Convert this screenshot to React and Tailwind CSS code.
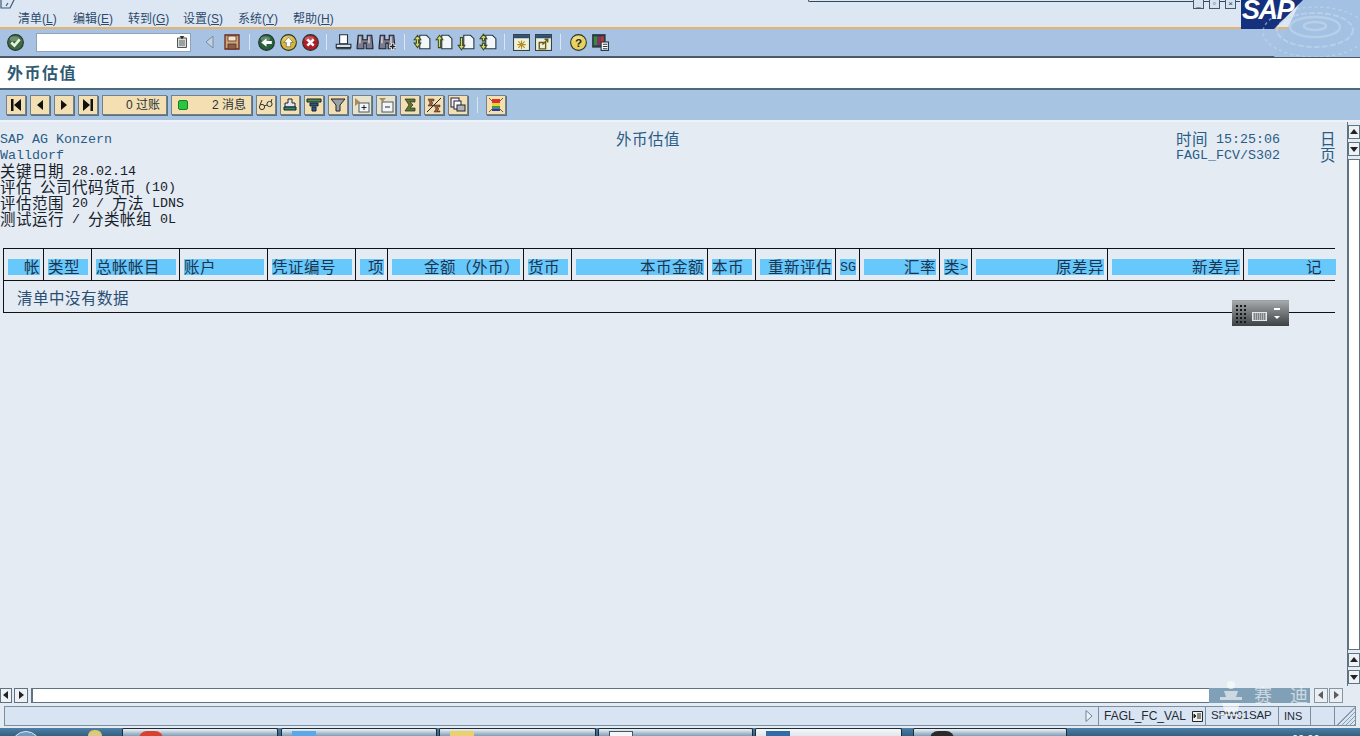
const cjkRe = /([\u0000-\u00ff]+)/;

// latin at 8px advance, CJK at 16px, like the SAP list font
const Mono = ({ text }) => (
  <>
    {text.split(cjkRe).filter(Boolean).map((part, i) =>
      cjkRe.test(part) ? (
        <span key={i} className="h-4 leading-[18px] text-[13.33px]">{part}</span>
      ) : (
        <span key={i} className="h-4 leading-[14px] text-[15.5px] tracking-[0.5px] font-['Noto_Sans_CJK_SC',sans-serif]">{part}</span>
      )
    )}
  </>
);

const Icon = ({ children, className = "w-4 h-4" }) => (
  <svg viewBox="0 0 16 16" className={className}>{children}</svg>
);

const Round = ({ fill, children }) => (
  <Icon className="w-[17px] h-[17px]">
    <circle cx="8" cy="8" r="7.4" fill={fill} stroke="#26352c" strokeWidth="1" />
    <ellipse cx="7" cy="4.5" rx="4.5" ry="2.4" fill="#ffffff" opacity="0.25" />
    {children}
  </Icon>
);

const Binoculars = ({ plus }) => (
  <Icon className="w-[18px] h-[18px]">
    <path d="M2 2h4v4h4V2h4l1 10v2H9V9H7v5H1v-2z" fill="#7c7c8e" stroke="#22222c" strokeWidth="1" />
    <path d="M3.500 3v6M11.500 3v6" stroke="#dcdce6" strokeWidth="1.2" />
    {plus && <path d="M10 12h6M13 9v6" stroke="#ffffff" strokeWidth="3" />}
    {plus && <path d="M10.5 12h5M13 9.5v5" stroke="#222" strokeWidth="1.4" />}
  </Icon>
);

const Page = ({ arrow }) => (
  <Icon className="w-[18px] h-[18px]">
    <path d="M6 2h6l3 3v9H6z" fill="#f4f7fa" stroke="#2a3a44" />
    <path d={arrow} fill="#d9d76a" stroke="#3a4a22" strokeWidth="0.9" />
  </Icon>
);

const MiniWin = ({ children }) => (
  <Icon className="w-[17px] h-[17px]">
    <rect x="0.5" y="0.5" width="15" height="15" fill="#eef2d8" stroke="#34424c" />
    <rect x="1" y="1" width="14" height="3" fill="#2d4d72" />
    {children}
  </Icon>
);

const Sep = ({ className }) => (
  <div className={`flex justify-center ${className}`}>
    <div className="w-px h-[16px] bg-[#dbe6f2]" />
  </div>
);

const Tool = ({ children }) => (
  <div className="w-[22px] h-[20px] flex items-center justify-center shrink-0">{children}</div>
);

const Btn = ({ children, light }) => (
  <div
    className={`w-5 h-5 shrink-0 flex items-center justify-center border border-[#71828f] shadow-[1px_1px_0_#5f6f7c] ${
      light ? "bg-[#e7e3cd]" : "bg-[#f3dfb2]"
    }`}
  >
    {children}
  </div>
);

const columns = [
  { w: "w-[40px]", t: "帐", right: true },
  { w: "w-[48px]", t: "类型" },
  { w: "w-[88px]", t: "总帐帐目" },
  { w: "w-[88px]", t: "账户" },
  { w: "w-[88px]", t: "凭证编号" },
  { w: "w-[32px]", t: "项", right: true },
  { w: "w-[136px]", t: "金额（外币）", right: true },
  { w: "w-[48px]", t: "货币" },
  { w: "w-[136px]", t: "本币金额", right: true },
  { w: "w-[48px]", t: "本币" },
  { w: "w-[80px]", t: "重新评估", right: true },
  { w: "w-[24px]", t: "SG" },
  { w: "w-[80px]", t: "汇率", right: true },
  { w: "w-[32px]", t: "类>" },
  { w: "w-[136px]", t: "原差异", right: true },
  { w: "w-[136px]", t: "新差异", right: true },
  { w: "w-[92px]", t: "记", right: true, last: true },
];

const menus = [
  ["清单", "L"],
  ["编辑", "E"],
  ["转到", "G"],
  ["设置", "S"],
  ["系统", "Y"],
  ["帮助", "H"],
];

const ScrollBtn = ({ dir, className = "" }) => (
  <div className={`border border-[#5f7480] bg-[#eef2f6] flex items-center justify-center ${className}`}>
    <svg viewBox="0 0 8 8" className="w-2 h-2">
      {dir === "up" && <path d="M0 6L4 1l4 5z" fill="#222" />}
      {dir === "down" && <path d="M0 2l4 5 4-5z" fill="#222" />}
      {dir === "left" && <path d="M6 0L1 4l5 4z" fill="#222" />}
      {dir === "right" && <path d="M2 0l5 4-5 4z" fill="#222" />}
    </svg>
  </div>
);

const Menu = () => (
  <div className="relative h-[29px] shrink-0 bg-[#dde7f3] border-b-2 border-[#e6b36c] flex items-end pl-[18px] gap-[13px] text-[12px] leading-[16px] text-[#2d4a6c] font-['Liberation_Sans','Noto_Sans_CJK_SC',sans-serif]">
    <svg viewBox="0 0 16 10" className="absolute left-0 top-0 w-4 h-[10px]">
      <path d="M1 0v8h9l4-8M6 6l2-3" fill="none" stroke="#3a5a7a" strokeWidth="1.2" />
    </svg>
    <div className="absolute left-[808px] top-0 w-[432px] h-[2px] border-b border-l border-[#33475a] rounded-bl-sm" />
    {menus.map(([name, key]) => (
      <span key={key} className="w-[42px] whitespace-nowrap">
        {name}(<span className="underline">{key}</span>)
      </span>
    ))}
    <div className="absolute left-[1193px] top-0 flex gap-[5px]">
      {["_", "▫", "×"].map((g) => (
        <span key={g} className="w-[11px] h-[9px] border border-t-0 border-[#43586c] bg-[#d6e2ef] text-[8px] leading-[7px] text-center text-[#2a3a4a]">
          {g}
        </span>
      ))}
    </div>
  </div>
);

const Logo = () => (
  <div className="absolute left-[1241px] top-0 w-[119px] h-[57px] overflow-hidden">
    <svg viewBox="0 0 119 57" className="absolute inset-0 w-full h-full">
      <path d="M60 0h59v57H33z" fill="#a3c1e2" />
      <path d="M0 0h62L33 29H0z" fill="#15307c" />
      <g fill="none" stroke="#c8dcf0" opacity="0.55">
        <ellipse cx="74" cy="26" rx="11" ry="4" strokeWidth="2.5" />
        <ellipse cx="74" cy="27" rx="25" ry="10" strokeWidth="2.5" />
        <ellipse cx="74" cy="30" rx="38" ry="17" strokeWidth="2" strokeDasharray="6 2" />
        <ellipse cx="74" cy="32" rx="52" ry="25" strokeWidth="1.5" strokeDasharray="3 3" />
      </g>
    </svg>
    <span className="absolute left-[1px] top-[-6px] text-[27px] leading-[32px] font-bold italic tracking-[-1.5px] text-white font-['Liberation_Sans',sans-serif]">
      SAP
    </span>
  </div>
);

const Toolbar = () => (
  <div className="h-[29px] shrink-0 bg-[#a7c2e2] border-b-2 border-[#4b5a66] flex items-center pl-1 pb-[1px]">
    <Tool>
      <Round fill="#3e6a45"><path d="M4 8l3 3 5-6" fill="none" stroke="#eef4d8" strokeWidth="2.4" /></Round>
    </Tool>
    <div className="ml-[10px] w-[155px] h-[19px] bg-white border border-[#8ea3b8] flex items-center justify-end pr-[3px]">
      <svg viewBox="0 0 10 12" className="w-[10px] h-3">
        <path d="M0.5 2h9v9.5h-9z" fill="#d8dcd8" stroke="#4a5a5a" />
        <path d="M3 0h4l-2 3z M2 5h6M2 7h6M2 9h6" fill="#222" stroke="#444" strokeWidth="0.8" />
      </svg>
    </div>
    <div className="ml-2" />
    <Tool>
      <svg viewBox="0 0 10 14" className="w-[10px] h-[14px]"><path d="M8 1L1 7l7 6z" fill="#c3d2e2" stroke="#7d8c9a" /></svg>
    </Tool>
    <Tool>
      <Icon>
        <path d="M1 1h14v14H1z" fill="#c9a878" stroke="#6a2a22" strokeWidth="1.3" />
        <path d="M4 2h8v5H4z" fill="#efe6d2" stroke="#6a2a22" strokeWidth="0.8" />
        <path d="M4 10h8v5H4z" fill="#86604a" stroke="#6a2a22" strokeWidth="0.8" />
      </Icon>
    </Tool>
    <Sep className="w-3" />
    <Tool>
      <Round fill="#28623c"><path d="M3 8l5-4v2.5h5v3H8V12z" fill="#fff" /></Round>
    </Tool>
    <Tool>
      <Round fill="#d8b838"><path d="M8 3l4.5 5H10v4H6V8H3.500z" fill="#fff" stroke="#444" strokeWidth="0.5" /></Round>
    </Tool>
    <Tool>
      <Round fill="#b01d26"><path d="M5 5l6 6M11 5l-6 6" stroke="#fff" strokeWidth="2.4" /></Round>
    </Tool>
    <Sep className="w-[11px]" />
    <Tool>
      <Icon className="w-[18px] h-[18px]">
        <path d="M5 1.500h7l0 8H5z" fill="#fff" stroke="#25313c" />
        <path d="M2 10h13v3H2z" fill="#d8dee4" stroke="#25313c" />
        <path d="M2 13.500h13v1H2z" fill="#25313c" />
      </Icon>
    </Tool>
    <Tool><Binoculars /></Tool>
    <Tool><Binoculars plus /></Tool>
    <Sep className="w-[13px]" />
    <Tool><Page arrow="M1 6l3-4 3 4H5v3l2 0-3 4-3-4h2V6z" /></Tool>
    <Tool><Page arrow="M1 6l3-4 3 4H5v7H3V6z" /></Tool>
    <Tool><Page arrow="M3 4h2v7h2l-3 4-3-4h2z" /></Tool>
    <Tool><Page arrow="M1 5l3-4 3 4H5v2H3V5zM3 9h2v2h2l-3 4-3-4h2z" /></Tool>
    <Sep className="w-[11px]" />
    <Tool>
      <MiniWin><path d="M8 6v8M4 10h8M5 7l6 6M11 7l-6 6" stroke="#b88a20" strokeWidth="1" /></MiniWin>
    </Tool>
    <Tool>
      <MiniWin><path d="M4 14V8h6v6zM7 10l5-5M9 5h3v3" fill="none" stroke="#6a5a18" strokeWidth="1.3" /></MiniWin>
    </Tool>
    <Sep className="w-[13px]" />
    <Tool>
      <Round fill="#e8d25a"><text x="8" y="12.500" fontSize="11" fontWeight="700" textAnchor="middle" fill="#2a2a2a" fontFamily="Liberation Sans">?</text></Round>
    </Tool>
    <Tool>
      <Icon className="w-[18px] h-[18px]">
        <rect x="1" y="1" width="12" height="12" fill="#2b3a42" />
        <rect x="2.500" y="3" width="3" height="8" fill="#3a8a3e" />
        <rect x="5.500" y="3" width="3" height="8" fill="#8a2f6a" />
        <rect x="8.500" y="3" width="3" height="8" fill="#b03a3a" />
        <rect x="9" y="8" width="6.500" height="7.500" fill="#fff" stroke="#2b3a42" />
        <path d="M10.500 10h4M10.500 12h4M10.500 14h4" stroke="#2b3a42" />
      </Icon>
    </Tool>
  </div>
);

const ListToolbar = () => (
  <div className="h-[30px] shrink-0 bg-[#a8c4e3] flex items-center gap-1 pl-[6px]">
    <Btn><svg viewBox="0 0 10 12" className="w-[10px] h-3"><path d="M0 0h2.500v12H0zM10 0L3 6l7 6z" fill="#111" /></svg></Btn>
    <Btn><svg viewBox="0 0 10 12" className="w-[10px] h-3"><path d="M8 1L2 6l6 5z" fill="#111" /></svg></Btn>
    <Btn><svg viewBox="0 0 10 12" className="w-[10px] h-3"><path d="M2 1l6 5-6 5z" fill="#111" /></svg></Btn>
    <Btn><svg viewBox="0 0 10 12" className="w-[10px] h-3"><path d="M0 0l7 6-7 6zM7.500 0H10v12H7.500z" fill="#111" /></svg></Btn>
    <div className="w-[65px] h-5 shrink-0 border border-[#71828f] shadow-[1px_1px_0_#5f6f7c] bg-[#f3dfb2] flex items-center justify-end pr-[6px] text-[12px] text-[#26333f] font-['Liberation_Sans','Noto_Sans_CJK_SC',sans-serif] whitespace-pre">
      0 过账
    </div>
    <div className="w-[81px] h-5 shrink-0 border border-[#71828f] shadow-[1px_1px_0_#5f6f7c] bg-[#f3dfb2] flex items-center pl-[6px] pr-[5px] justify-between text-[12px] text-[#26333f] font-['Liberation_Sans','Noto_Sans_CJK_SC',sans-serif] whitespace-pre">
      <span className="w-[10px] h-[10px] rounded-[2px] bg-[#27c83a] border border-[#1d7a2a]" />
      <span>2 消息</span>
    </div>
    <Btn>
      <Icon><circle cx="4" cy="10" r="2.600" fill="none" stroke="#333" /><circle cx="11.500" cy="7" r="2.600" fill="none" stroke="#333" /><path d="M6 9l3-1M2 8l2-5M13 5l1-3" stroke="#333" fill="none" /></Icon>
    </Btn>
    <Btn>
      <Icon><path d="M6 2h4v4h3v4H3V6h3z" fill="#dfe4e8" stroke="#223" /><path d="M2 10h12v3H2z" fill="#2f8a6a" stroke="#123" /></Icon>
    </Btn>
    <Btn>
      <Icon><path d="M1 2h14v3H1z" fill="#4f8f4a" stroke="#123" /><path d="M4 6h8v3H4z" fill="#2a5a8a" stroke="#123" /><path d="M6 10h4v4H6z" fill="#2a5a8a" stroke="#123" /></Icon>
    </Btn>
    <Btn>
      <Icon><path d="M1 2h14L10 8v6H6V8z" fill="#9aa2a8" stroke="#223" /></Icon>
    </Btn>
    <Btn light>
      <Icon><path d="M1 1l5 4-5 4z" fill="#b08a50" /><rect x="5" y="6" width="10" height="9" fill="#f4f6f6" stroke="#4a5a62" /><path d="M10 8v5M7.500 10.500h5" stroke="#223" /></Icon>
    </Btn>
    <Btn light>
      <Icon><path d="M1 1h7l-3.500 4z" fill="#b08a50" /><rect x="4" y="5" width="11" height="10" fill="#f4f6f6" stroke="#4a5a62" /><path d="M7 10h5" stroke="#223" /></Icon>
    </Btn>
    <Btn>
      <Icon><path d="M3 2h10v3H8l3 3-3 3h5v3H3l4-6z" fill="#5a7a2a" stroke="#223" strokeWidth="0.7" /></Icon>
    </Btn>
    <Btn>
      <Icon><path d="M2 2h6v2H5l2 2-2 2h3v1H2l2-3zM8 8h6v2h-3l2 2-2 2h3v1H8l2-3z" fill="#a85a28" stroke="#223" strokeWidth="0.5" /><path d="M1 15L15 1" stroke="#223" /></Icon>
    </Btn>
    <Btn>
      <Icon><rect x="1" y="1" width="8" height="9" fill="#eef" stroke="#223" /><rect x="4" y="4" width="7" height="8" fill="#fff" stroke="#223" /><rect x="7" y="8" width="8" height="6" fill="#aeb6bc" stroke="#223" /></Icon>
    </Btn>
    <Sep className="w-[10px]" />
    <Btn>
      <Icon>
        <path d="M1 1l3 3M15 1l-3 3M1 15l3-3M15 15l-3-3" stroke="#8a5a20" />
        <rect x="4" y="2" width="8" height="4" fill="#d8342c" />
        <rect x="4" y="6" width="8" height="3" fill="#e8d040" />
        <rect x="4" y="9" width="8" height="2.500" fill="#3aa03a" />
        <rect x="4" y="11.500" width="8" height="2.500" fill="#2a3aa8" />
      </Icon>
    </Btn>
  </div>
);

const Line = ({ text }) => (
  <div className="flex h-4 whitespace-pre"><Mono text={text} /></div>
);

const ListContent = () => (
  <div className="w-[1335px] shrink-0 pt-[9px] text-[#17212b] font-['Liberation_Mono','Noto_Sans_CJK_SC',monospace]">
    <div className="grid grid-cols-[616px_560px_144px_15px] text-[#2a5c86]">
      <Line text="SAP AG Konzern" />
      <Line text="外币估值" />
      <Line text="时间 15:25:06" />
      <Line text="日" />
      <Line text="Walldorf" />
      <div />
      <Line text="FAGL_FCV/S302" />
      <Line text="页" />
    </div>
    <Line text="关键日期 28.02.14" />
    <Line text="评估 公司代码货币 (10)" />
    <Line text="评估范围 20 / 方法 LDNS" />
    <Line text="测试运行 / 分类帐组 0L" />
    <div className="mt-[21px] ml-[3px] w-[1332px] border-l border-t border-b border-[#111]">
      <div className="flex h-[32px] border-b border-[#111]">
        {columns.map((c) => (
          <div key={c.t} className={`shrink-0 h-full ${c.w} ${c.last ? "" : "border-r border-[#111]"} pt-[10px] pl-1 ${c.last ? "" : "pr-[3px]"}`}>
            <div className={`h-4 bg-[#66c8fb] text-[#1c3450] flex whitespace-pre ${c.right ? "justify-end" : ""} ${c.last ? "pr-[14px]" : ""}`}>
              <Mono text={c.t} />
            </div>
          </div>
        ))}
      </div>
      <div className="h-[31px] pl-[13px] pt-[2px] flex items-center text-[#2a4d72]">
        <Line text="清单中没有数据" />
      </div>
    </div>
  </div>
);

const Content = () => (
  <div className="relative flex-1 min-h-0 bg-[#e4ebf3] border-t-2 border-[#eef2f7] flex">
    <ListContent />
    <div className="ml-[12px] w-[13px] shrink-0 border-l border-[#5f7480] flex flex-col pt-[3px] pb-[2px] gap-[3px] bg-[#e4ebf3]">
      <ScrollBtn dir="up" className="h-[14px]" />
      <ScrollBtn dir="down" className="h-[14px]" />
      <div className="flex-1 bg-white border border-[#5f7480]" />
      <ScrollBtn dir="up" className="h-[14px]" />
      <ScrollBtn dir="down" className="h-[14px]" />
    </div>
    {/* on screen keyboard widget floating above the list */}
    <div className="absolute left-[1232px] top-[178px] w-[57px] h-[26px] border-t border-[#9aa0a4] bg-gradient-to-b from-[#a6aaac] to-[#3e4244] flex items-center">
      <div className="ml-[3px] w-[12px] h-[20px] bg-[radial-gradient(#15181a_1px,transparent_1px)] bg-[length:4px_4px]" />
      <div className="ml-[5px] w-[15px] h-[9px] border border-[#e4e8ec] bg-[repeating-linear-gradient(90deg,#b0b6ba_0,#b0b6ba_1px,#7c8286_1px,#7c8286_2px)] mt-[5px]" />
      <div className="ml-[7px] flex flex-col gap-[6px] text-white">
        <div className="w-[6px] h-[2px] bg-white" />
        <svg viewBox="0 0 6 3" className="w-[6px] h-[3px]"><path d="M0 0h6L3 3z" fill="#fff" /></svg>
      </div>
    </div>
  </div>
);

const HScroll = () => (
  <div className="relative h-[18px] shrink-0 bg-[#e4ebf3] flex items-center">
    <ScrollBtn dir="left" className="w-[12px] h-[15px]" />
    <ScrollBtn dir="right" className="ml-[2px] w-[14px] h-[15px]" />
    <div className="ml-[3px] w-[1178px] h-[15px] bg-white border-l-2 border-b border-t border-[#5f7480]" />
    <div className="w-[101px] h-[15px] bg-[#7fa0b6]" />
    <ScrollBtn dir="left" className="ml-[4px] w-[14px] h-[15px] opacity-70" />
    <ScrollBtn dir="right" className="ml-[1px] w-[14px] h-[15px] opacity-70" />
  </div>
);

const StatusBar = () => (
  <div className="relative h-[24px] shrink-0 bg-[#e4ebf3] pl-[4px] pb-[2px] pt-[2px] flex text-[12px] text-[#1f2a36] font-['Liberation_Sans',sans-serif]">
    <div className="flex-1 flex h-[20px] bg-[#d9e4f2] border border-[#7a8fa2] items-center">
      <div className="flex-1 flex justify-end pr-[5px]">
        <svg viewBox="0 0 8 12" className="w-2 h-3"><path d="M1 0.500l6 5.500-6 5.500z" fill="#eef3f8" stroke="#71828f" /></svg>
      </div>
      <div className="w-[107px] h-full border-l border-[#7a8fa2] pl-[5px] flex items-center gap-[6px]">
        <span>FAGL_FC_VAL</span>
        <svg viewBox="0 0 11 11" className="w-[11px] h-[11px]"><path d="M0.500 0.500h10v10h-10z" fill="#f0f2e2" stroke="#223" /><path d="M2 3l2 2-2 2zM5 3h4M5 5h4M5 7h4" stroke="#223" fill="#223" /></svg>
      </div>
      <div className="w-[73px] h-full border-l border-[#7a8fa2] pl-[5px] flex items-center text-[11.500px] tracking-[-0.2px]">SPW91SAP</div>
      <div className="w-[32px] h-full border-l border-[#7a8fa2] pl-[5px] flex items-center text-[11px]">INS</div>
      <div className="w-[25px] h-full border-l border-r border-[#7a8fa2]" />
      <div className="w-[20px] h-full bg-[repeating-linear-gradient(135deg,#d9e4f2_0,#d9e4f2_2px,#8b9cac_2px,#8b9cac_3px)] [clip-path:polygon(100%_0,100%_100%,0_100%)]" />
    </div>
    <div className="w-1" />
    {/* site watermark sitting over the scrollbar and status bar */}
    <svg viewBox="0 0 26 36" className="absolute left-[1215px] top-[-24px] w-[32px] h-[36px] opacity-60">
      <path d="M13 1a4 4 0 110 8 4 4 0 010-8zM6 11h14l-2 6h6v3H2v-3h6zM4 23h18l-3 9H7zM1 34h24v2H1z" fill="#ffffff" />
    </svg>
    <div className="absolute left-[1254px] top-[-21px] text-[18px] leading-[22px] text-white/60 tracking-[18px] font-['Noto_Sans_CJK_SC',sans-serif] whitespace-nowrap">
      赛迪
    </div>
  </div>
);

const taskButtons = [
  { w: "w-[156px]", ml: "ml-0", bg: "from-[#eef3f7] to-[#7f9db6]", icon: "ml-[16px] bg-[#d8402f] rounded-t-full" },
  { w: "w-[156px]", ml: "ml-[3px]", bg: "from-[#eef3f7] to-[#7f9db6]", icon: "ml-[10px] bg-[#5aa8e8]" },
  { w: "w-[157px]", ml: "ml-[2px]", bg: "from-[#eef3f7] to-[#7f9db6]", icon: "ml-[10px] bg-[#eccf6e]" },
  { w: "w-[155px]", ml: "ml-[2px]", bg: "from-[#eef3f7] to-[#7f9db6]", icon: "ml-[10px] bg-[#f4f6f8] border border-[#44586a]" },
  { w: "w-[147px]", ml: "ml-[2px]", bg: "from-[#f6f8fa] to-[#dfe6ec]", icon: "ml-[10px] bg-[#2f6ca8]" },
  { w: "w-[154px]", ml: "ml-[11px]", bg: "from-[#eef3f7] to-[#7f9db6]", icon: "ml-[16px] bg-[#2a2a2a] rounded-t-full" },
];

const Taskbar = () => (
  <div className="relative h-[8px] shrink-0 bg-gradient-to-b from-[#4f7fa8] to-[#33607f] flex pl-[122px] overflow-hidden">
    <div className="absolute left-[11px] top-[3px] w-[30px] h-[30px] rounded-full border border-[#dfe8ef] bg-[#6f9ac0]" />
    <div className="absolute left-[88px] top-[2px] w-[14px] h-[12px] rounded-t-md border-t-2 border-[#e4c85a] bg-[#d9c98a]" />
    {taskButtons.map((b, i) => (
      <div key={i} className={`shrink-0 h-full ${b.w} ${b.ml} rounded-t-[2px] border-t border-x border-[#1e2c38] bg-gradient-to-b ${b.bg}`}>
        <div className={`${b.icon} mt-[2px] w-[24px] h-[8px]`} />
      </div>
    ))}
    <div className="absolute left-[1292px] top-[5px] text-white text-[11px] leading-[12px] font-['Liberation_Sans',sans-serif]">00:00</div>
  </div>
);

export default function App() {
  return (
    <div className="relative w-[1360px] h-[736px] overflow-hidden flex flex-col bg-[#e4ebf3]">
      <Menu />
      <Logo />
      <Toolbar />
      <div className="h-[32px] shrink-0 bg-white border-b-2 border-[#4b6a7c] flex items-center pl-[7px] pb-[3px] text-[16px] font-bold tracking-[1.5px] text-[#2f5a72] font-['Noto_Sans_CJK_SC',sans-serif]">
        外币估值
      </div>
      <ListToolbar />
      <Content />
      <HScroll />
      <StatusBar />
      <Taskbar />
    </div>
  );
}
